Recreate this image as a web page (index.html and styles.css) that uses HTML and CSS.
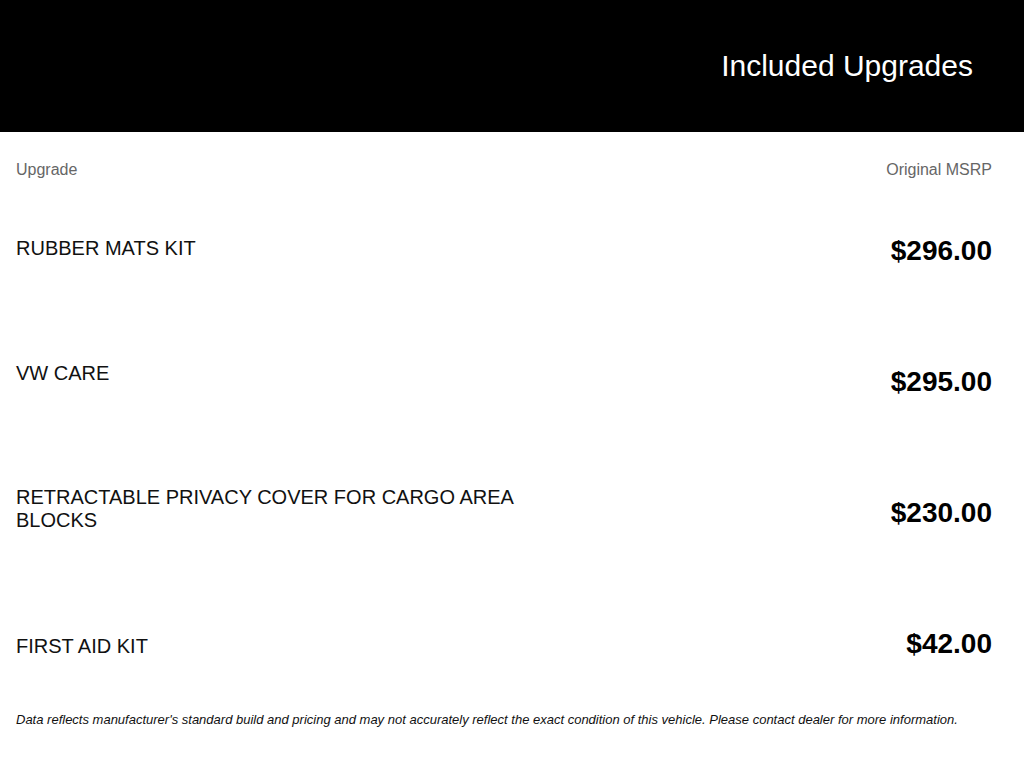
FILE: index.html
```html
<!DOCTYPE html>
<html lang="en">
<head>
<meta charset="utf-8">
<title>Included Upgrades</title>
<link rel="stylesheet" href="styles.css">
</head>
<body>
<header class="banner">
  <h1 class="banner-title">Included Upgrades</h1>
</header>
<main class="upgrades">
  <div class="upgrades-head">
    <span>Upgrade</span>
    <span>Original MSRP</span>
  </div>
  <div class="upgrade-row">
    <div class="upgrade-name lift-sm">RUBBER MATS KIT</div>
    <div class="upgrade-price">$296.00</div>
  </div>
  <div class="upgrade-row">
    <div class="upgrade-name lift-lg">VW CARE</div>
    <div class="upgrade-price">$295.00</div>
  </div>
  <div class="upgrade-row">
    <div class="upgrade-name lift-md">RETRACTABLE PRIVACY COVER FOR CARGO AREA BLOCKS</div>
    <div class="upgrade-price">$230.00</div>
  </div>
  <div class="upgrade-row">
    <div class="upgrade-name drop">FIRST AID KIT</div>
    <div class="upgrade-price">$42.00</div>
  </div>
  <p class="disclaimer">Data reflects manufacturer's standard build and pricing and may not accurately reflect the exact condition of this vehicle. Please contact dealer for more information.</p>
</main>
</body>
</html>
```

FILE: styles.css
```css
* { box-sizing: border-box; }
html, body {
  margin: 0;
  padding: 0;
  background: #fff;
  font-family: "Liberation Sans", Arial, sans-serif;
  color: #000;
}
.banner {
  height: 132px;
  background: #000;
  display: flex;
  align-items: center;
  justify-content: flex-end;
  padding-right: 51px;
}
.banner-title {
  margin: 0;
  color: #fff;
  font-size: 30px;
  font-weight: 400;
  line-height: 34px;
}
.upgrades {
  padding: 0 32px 0 16px;
}
.upgrades-head {
  display: flex;
  justify-content: space-between;
  padding-top: 28px;
  padding-bottom: 5px;
  font-size: 16px;
  line-height: 20px;
  color: #666;
}
.upgrade-row {
  height: 131px;
  display: flex;
  align-items: center;
  justify-content: space-between;
}
.upgrade-name {
  width: 540px;
  font-size: 20px;
  line-height: 23px;
  color: #111;
}
.lift-sm { margin-bottom: 4px; }
.lift-md { margin-bottom: 8px; }
.lift-lg { margin-bottom: 16px; }
.drop { margin-top: 6px; }
.upgrade-price {
  font-size: 28px;
  font-weight: 700;
  line-height: 32px;
}
.disclaimer {
  margin: 0;
  padding-top: 3px;
  font-size: 13px;
  line-height: 15px;
  font-style: italic;
  color: #111;
}
```
